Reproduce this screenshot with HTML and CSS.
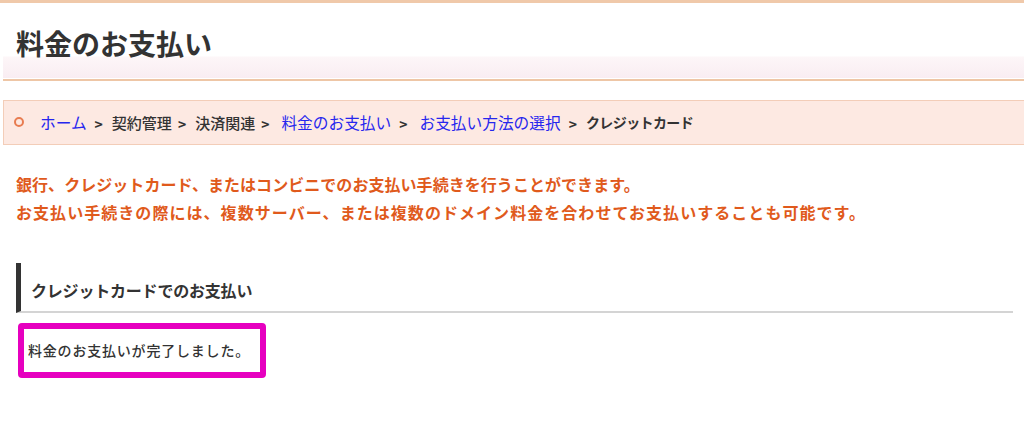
FILE: index.html
```html
<!DOCTYPE html>
<html lang="ja">
<head>
<meta charset="utf-8">
<title>料金のお支払い</title>
<link rel="stylesheet" href="styles.css">
</head>
<body>
<div class="topline"></div>
<header class="page-head">
  <h1 class="page-title">料金のお支払い</h1>
</header>
<nav class="crumbs">
  <span class="crumb-dot"></span>
  <a class="crumb-link" href="#">ホーム</a>
  <span class="sep">&gt;</span>
  <span class="crumb">契約管理</span>
  <span class="sep tight">&gt;</span>
  <span class="crumb">決済関連</span>
  <span class="sep tight wide">&gt;</span>
  <a class="crumb-link" href="#">料金のお支払い</a>
  <span class="sep wide">&gt;</span>
  <a class="crumb-link" href="#">お支払い方法の選択</a>
  <span class="sep">&gt;</span>
  <span class="crumb current">クレジットカード</span>
</nav>
<p class="notice">銀行、クレジットカード、またはコンビニでのお支払い手続きを行うことができます。<br><span class="line2">お支払い手続きの際には、複数サーバー、または複数のドメイン料金を合わせてお支払いすることも可能です。</span></p>
<h2 class="section-title">クレジットカードでのお支払い</h2>
<div class="done-box">料金のお支払いが完了しました。</div>
</body>
</html>
```
FILE: styles.css
```css
html, body {
  margin: 0;
  padding: 0;
  background: #fff;
}
body {
  font-family: "Noto Sans CJK JP", "Noto Sans", sans-serif;
  color: #333;
}
.topline {
  height: 3px;
  background: #f0c9aa;
}
.page-head {
  margin-left: 3px;
  height: 76px;
  border-bottom: 2px solid #eec6a6;
  background: linear-gradient(to bottom, #ffffff 0, #ffffff 53px, #fdf6f8 54px, #f9edf2 75px, #ffffff 75px, #ffffff 76px);
  box-sizing: content-box;
}
.page-title {
  margin: 0;
  padding: 20px 0 0 13px;
  font-size: 28px;
  line-height: 40px;
  font-weight: bold;
  color: #333;
}
.crumbs {
  margin: 19px 0 0 3px;
  height: 43px;
  border-top: 1px solid #f3cdb8;
  border-bottom: 1px solid #f3cdb8;
  border-left: 1px solid #f3cdb8;
  background: #fde9e2;
  display: flex;
  align-items: center;
  font-size: 15px;
  line-height: 43px;
  padding-left: 10px;
}
.crumb-dot {
  width: 6px;
  height: 6px;
  border: 2px solid #e87c50;
  border-radius: 50%;
  margin-right: 16px;
  margin-top: -2px;
}
.crumb-link {
  color: #2626ee;
  text-decoration: none;
  font-size: 15.7px;
}
.crumb {
  color: #333;
  font-weight: 500;
}
.crumb.current {
  font-weight: bold;
  font-size: 14px;
  letter-spacing: -0.6px;
}
.sep {
  color: #333;
  font-weight: bold;
  margin: 3px 9px 0 8px;
  font-size: 14px;
}
.sep.tight {
  margin-left: 6px;
}
.sep.wide {
  margin-right: 12px;
}
.notice {
  margin: 25px 0 0 16px;
  font-size: 16px;
  line-height: 28px;
  font-weight: bold;
  color: #e05a1c;
  letter-spacing: 0.05px;
}
.notice .line2 {
  letter-spacing: 1.05px;
}
.section-title {
  margin: 37px 11px 0 16px;
  height: 42px;
  padding: 6px 0 0 10px;
  border-left: 5px solid #333;
  border-bottom: 2px solid #d4d4d4;
  font-size: 16px;
  line-height: 42px;
  font-weight: bold;
  color: #333;
  letter-spacing: -0.2px;
}
.done-box {
  margin: 10px 0 0 18px;
  width: 232px;
  height: 43px;
  border: 6px solid #e600bf;
  border-radius: 4px;
  padding-left: 4px;
  font-size: 14px;
  line-height: 43px;
  color: #333;
  font-weight: 500;
  letter-spacing: 0.8px;
  box-sizing: content-box;
}
```
